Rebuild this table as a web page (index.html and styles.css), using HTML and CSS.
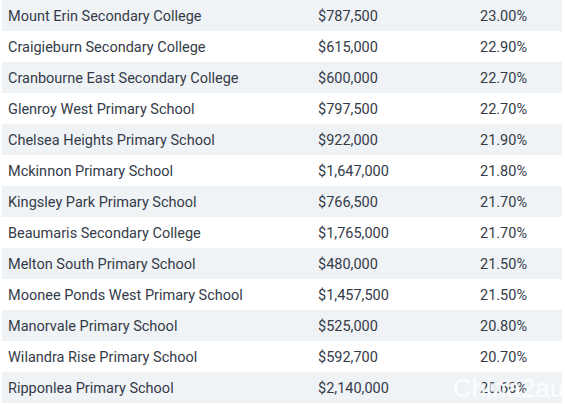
FILE: index.html
```html
<!DOCTYPE html>
<html>
<head>
<meta charset="utf-8">
<link rel="stylesheet" href="styles.css">
</head>
<body>
<div class="wrap">
<table class="data">
<tbody>
<tr><td class="name">Mount Erin Secondary College</td><td class="price">$787,500</td><td class="pct">23.00%</td></tr>
<tr><td class="name">Craigieburn Secondary College</td><td class="price">$615,000</td><td class="pct">22.90%</td></tr>
<tr><td class="name">Cranbourne East Secondary College</td><td class="price">$600,000</td><td class="pct">22.70%</td></tr>
<tr><td class="name">Glenroy West Primary School</td><td class="price">$797,500</td><td class="pct">22.70%</td></tr>
<tr><td class="name">Chelsea Heights Primary School</td><td class="price">$922,000</td><td class="pct">21.90%</td></tr>
<tr><td class="name">Mckinnon Primary School</td><td class="price">$1,647,000</td><td class="pct">21.80%</td></tr>
<tr><td class="name">Kingsley Park Primary School</td><td class="price">$766,500</td><td class="pct">21.70%</td></tr>
<tr><td class="name">Beaumaris Secondary College</td><td class="price">$1,765,000</td><td class="pct">21.70%</td></tr>
<tr><td class="name">Melton South Primary School</td><td class="price">$480,000</td><td class="pct">21.50%</td></tr>
<tr><td class="name">Moonee Ponds West Primary School</td><td class="price">$1,457,500</td><td class="pct">21.50%</td></tr>
<tr><td class="name">Manorvale Primary School</td><td class="price">$525,000</td><td class="pct">20.80%</td></tr>
<tr><td class="name">Wilandra Rise Primary School</td><td class="price">$592,700</td><td class="pct">20.70%</td></tr>
<tr><td class="name">Ripponlea Primary School</td><td class="price">$2,140,000</td><td class="pct">20.60%</td></tr>
</tbody>
</table>
<div class="watermark">China2au</div>
</div>
</body>
</html>
```

FILE: styles.css
```css
html, body {
  margin: 0;
  padding: 0;
  background: #ffffff;
}
.wrap {
  position: relative;
  width: 565px;
  height: 404px;
  overflow: hidden;
  padding-left: 2px;
  box-sizing: border-box;
}
.data {
  border-collapse: collapse;
  width: 560px;
  table-layout: fixed;
  font-family: "Roboto", "Liberation Sans", sans-serif;
  font-size: 14.5px;
  color: #343b49;
}
.data tr {
  height: 31px;
}
.data tr:nth-child(odd) {
  background: #f0f3f6;
}
.data td {
  padding: 1px 0 0 6px;
  vertical-align: middle;
  white-space: nowrap;
}
.name { width: 304px; }
.price { width: 156px; }
.pct { width: 82px; }
.watermark {
  position: absolute;
  left: 453px;
  top: 373px;
  font-family: "Liberation Sans", Arial, sans-serif;
  font-size: 26px;
  color: rgba(255, 255, 255, 0.9);
  letter-spacing: 0;
}
```
